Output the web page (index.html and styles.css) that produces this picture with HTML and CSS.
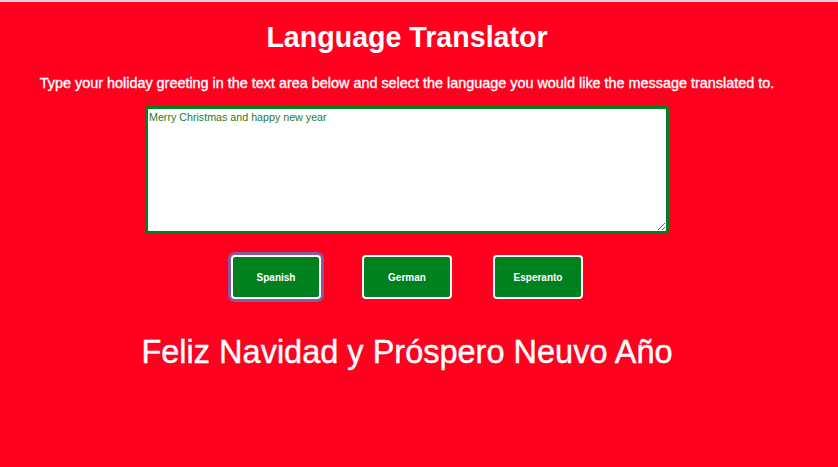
FILE: index.html
```html
<!DOCTYPE html>
<html lang="en">
<head>
<meta charset="utf-8">
<title>Language Translator</title>
<link rel="stylesheet" href="styles.css">
</head>
<body>
<div class="topbar"></div>
<main class="page">
  <h1 class="title">Language Translator</h1>
  <p class="intro">Type your holiday greeting in the text area below and select the language you would like the message translated to.</p>
  <textarea class="greeting">Merry Christmas and happy new year</textarea>
  <div class="buttons">
    <button class="lang focused">Spanish</button>
    <button class="lang">German</button>
    <button class="lang">Esperanto</button>
  </div>
  <p class="result">Feliz Navidad y Próspero Neuvo Año</p>
</main>
</body>
</html>
```
FILE: styles.css
```css
html, body {
  margin: 0;
  padding: 0;
  background: #ff001f;
  height: 100%;
}
body {
  font-family: "Liberation Sans", Arial, sans-serif;
  color: #fff;
}
.topbar {
  height: 2px;
  background: #d9d9d9;
}
.page {
  width: 814px;
  display: flex;
  flex-direction: column;
  align-items: center;
  text-align: center;
}
.title {
  margin: 19px 0 0;
  font-size: 28.6px;
  line-height: 32px;
  font-weight: bold;
}
.intro {
  margin: 21px 0 0;
  font-size: 14.4px;
  line-height: 18px;
  -webkit-text-stroke: 0.35px #fff;
}
.greeting {
  box-sizing: border-box;
  margin: 14px 0 0;
  width: 524px;
  height: 128px;
  border: 3px solid #01801f;
  border-radius: 4px;
  padding: 2px 1px;
  background: #fff;
  color: #1f7a2e;
  font-family: "Liberation Sans", Arial, sans-serif;
  font-size: 10.7px;
  line-height: 13px;
  resize: both;
  outline: none;
}
.buttons {
  display: flex;
  gap: 41px;
  margin-top: 21px;
}
.lang {
  box-sizing: border-box;
  width: 90px;
  height: 44px;
  background: #01801f;
  color: #fff;
  border: 2px solid #fff;
  border-radius: 4px;
  font-family: "Liberation Sans", Arial, sans-serif;
  font-size: 10px;
  font-weight: bold;
  padding: 0;
}
.lang.focused {
  box-shadow: 0 0 0 3px #8c5a9c;
}
.result {
  margin: 35px 0 0;
  font-size: 32.5px;
  line-height: 36px;
  -webkit-text-stroke: 0.4px #fff;
}
```
